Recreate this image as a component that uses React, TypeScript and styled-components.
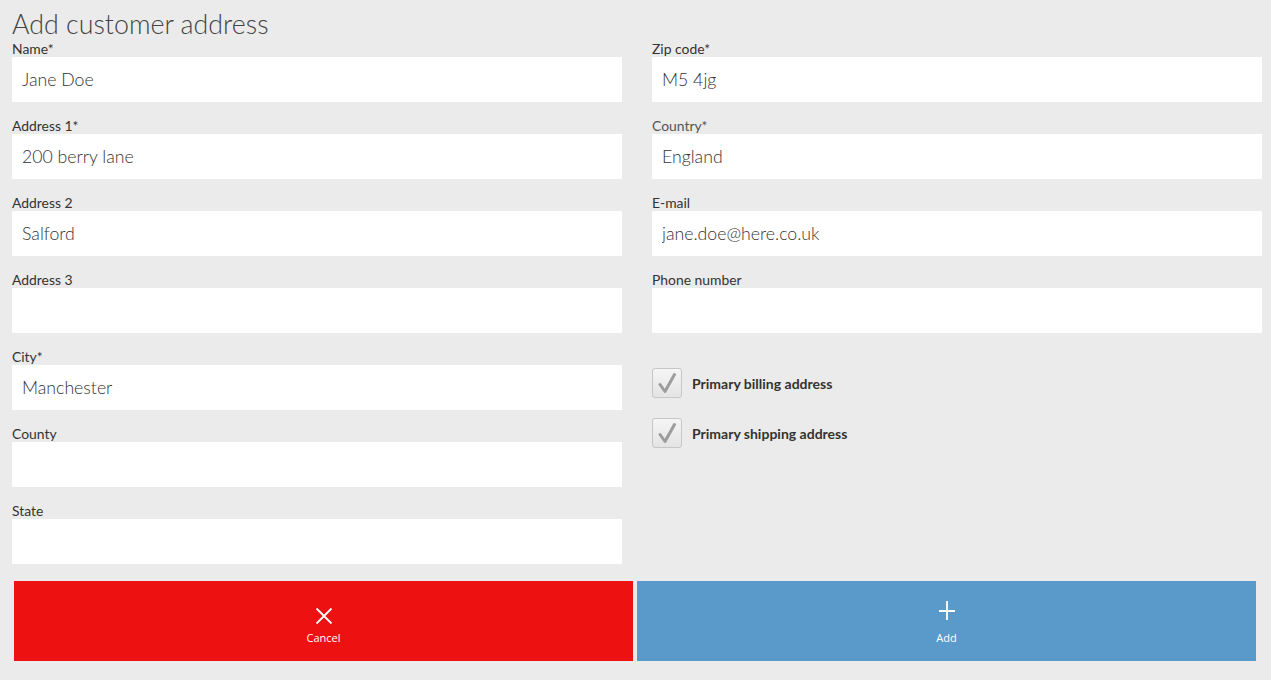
import React from "react";
import styled, { createGlobalStyle } from "styled-components";

const GlobalStyle = createGlobalStyle`
  html, body {
    margin: 0;
    padding: 0;
    background: #ffffff;
  }
  body {
    font-family: Lato, "Open Sans", sans-serif;
  }
`;

const Page = styled.div`
  width: 1271px;
  min-height: 680px;
  background: #ebebeb;
  box-sizing: border-box;
  padding: 6px 0 0;
`;

const Title = styled.h1`
  margin: 0 0 0 12px;
  font-family: Lato, sans-serif;
  font-weight: 300;
  font-size: 26.8px;
  line-height: 36px;
  color: #444;
`;

const Columns = styled.div`
  display: grid;
  grid-template-columns: 610px 610px;
  column-gap: 30px;
  padding-left: 12px;
`;

const Column = styled.div`
  display: flex;
  flex-direction: column;
`;

const Field = styled.div`
  display: flex;
  flex-direction: column;
  margin-bottom: 17px;
`;

const Label = styled.label<{ $muted?: boolean }>`
  font-family: Lato, sans-serif;
  font-size: 13.9px;
  line-height: 14px;
  padding-bottom: 1px;
  color: ${(p) => (p.$muted ? "#555" : "#333")};
`;

const Input = styled.input`
  height: 45px;
  border: none;
  outline: none;
  background: #fff;
  box-sizing: border-box;
  padding: 0 10px;
  font-family: Lato, sans-serif;
  font-weight: 300;
  font-size: 17.7px;
  color: #333;
`;

const Checks = styled.div`
  display: flex;
  flex-direction: column;
  gap: 20px;
  margin-top: 18px;
`;

const CheckRow = styled.label`
  display: flex;
  align-items: center;
  gap: 10px;
  font-family: Lato, sans-serif;
  font-weight: 700;
  font-size: 14px;
  color: #333;
`;

const Box = styled.span`
  width: 30px;
  height: 30px;
  box-sizing: border-box;
  border: 1px solid #c6c6c6;
  border-radius: 3px;
  background: linear-gradient(#f5f5f5, #e4e4e4);
  display: flex;
  align-items: center;
  justify-content: center;
`;

const Actions = styled.div`
  display: grid;
  grid-template-columns: 619px 619px;
  column-gap: 4px;
  padding: 0 0 0 14px;
`;

const ActionButton = styled.button<{ $tone: "cancel" | "add" }>`
  height: 80px;
  border: none;
  background: ${(p) => (p.$tone === "cancel" ? "#ee1111" : "#5a9aca")};
  color: #fff;
  display: flex;
  flex-direction: column;
  align-items: center;
  justify-content: center;
  gap: 5px;
  padding: 3px 0 0;
  font-family: "Open Sans", sans-serif;
  font-size: 11px;
  line-height: 15px;
  cursor: pointer;
`;

const Check = () => (
  <svg width="24" height="24" viewBox="0 0 24 24">
    <path d="M5 13.5 L10 20.5 L19.5 3.5" fill="none" stroke="#9c9c9c" strokeWidth="3" strokeLinecap="round" strokeLinejoin="round" />
  </svg>
);

const CrossIcon = () => (
  <svg width="24" height="24" viewBox="0 0 24 24">
    <path d="M4.5 7.5 L19.5 22.5 M19.5 7.5 L4.5 22.5" stroke="#fff" strokeWidth="1.8" />
  </svg>
);

const PlusIcon = () => (
  <svg width="24" height="24" viewBox="0 0 24 24">
    <path d="M12 0 L12 19 M4 10 L20 10" stroke="#fff" strokeWidth="1.8" />
  </svg>
);

type FieldDef = { label: string; value: string; muted?: boolean };

const left: FieldDef[] = [
  { label: "Name*", value: "Jane Doe" },
  { label: "Address 1*", value: "200 berry lane" },
  { label: "Address 2", value: "Salford" },
  { label: "Address 3", value: "" },
  { label: "City*", value: "Manchester" },
  { label: "County", value: "" },
  { label: "State", value: "" },
];

const right: FieldDef[] = [
  { label: "Zip code*", value: "M5 4jg" },
  { label: "Country*", value: "England", muted: true },
  { label: "E-mail", value: "jane.doe@here.co.uk" },
  { label: "Phone number", value: "" },
];

const renderField = (f: FieldDef) => (
  <Field key={f.label}>
    <Label $muted={f.muted}>{f.label}</Label>
    <Input defaultValue={f.value} />
  </Field>
);

export default function App() {
  return (
    <Page>
      <GlobalStyle />
      <Title>Add customer address</Title>
      <Columns>
        <Column>{left.map(renderField)}</Column>
        <Column>
          {right.map(renderField)}
          <Checks>
            <CheckRow>
              <Box>
                <Check />
              </Box>
              Primary billing address
            </CheckRow>
            <CheckRow>
              <Box>
                <Check />
              </Box>
              Primary shipping address
            </CheckRow>
          </Checks>
        </Column>
      </Columns>
      <Actions>
        <ActionButton $tone="cancel">
          <CrossIcon />
          Cancel
        </ActionButton>
        <ActionButton $tone="add">
          <PlusIcon />
          Add
        </ActionButton>
      </Actions>
    </Page>
  );
}
